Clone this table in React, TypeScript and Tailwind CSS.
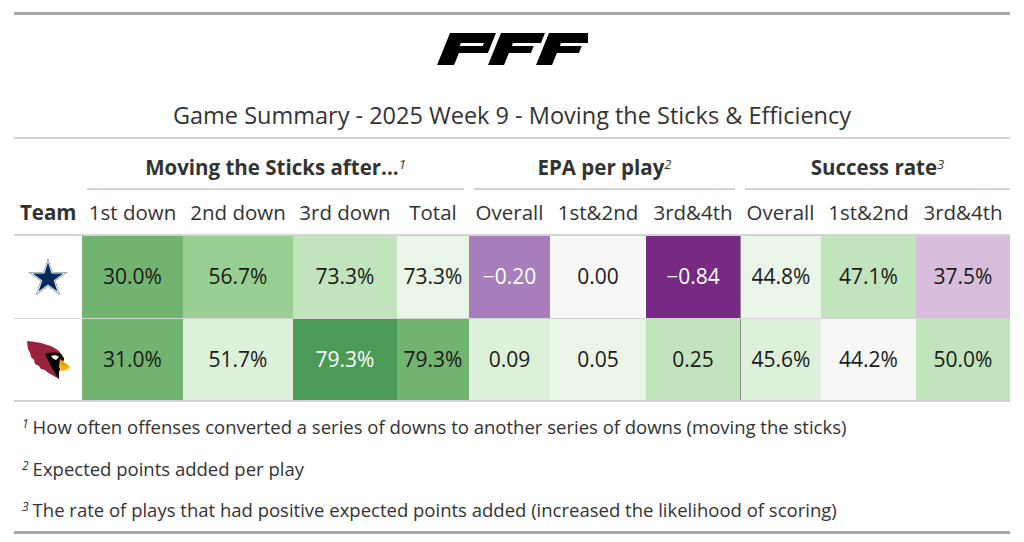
import React from "react";

const cols = "grid-cols-[68px_101px_110px_104px_72px_81px_96px_94px_81px_95px_94px]";

type Cell = { v: string; bg: string; light?: boolean; divider?: boolean };

const rows: { team: "dal" | "ari"; cells: Cell[] }[] = [
  {
    team: "dal",
    cells: [
      { v: "30.0%", bg: "bg-[#72b46f]" },
      { v: "56.7%", bg: "bg-[#99cf92]" },
      { v: "73.3%", bg: "bg-[#c1e4bc]" },
      { v: "73.3%", bg: "bg-[#e9f5e6]" },
      { v: "\u22120.20", bg: "bg-[#a77fbc]", light: true },
      { v: "0.00", bg: "bg-[#f7f7f7]" },
      { v: "\u22120.84", bg: "bg-[#762a83]", light: true },
      { v: "44.8%", bg: "bg-[#e9f5e6]", divider: true },
      { v: "47.1%", bg: "bg-[#c1e4bc]" },
      { v: "37.5%", bg: "bg-[#d9bddc]" },
    ],
  },
  {
    team: "ari",
    cells: [
      { v: "31.0%", bg: "bg-[#72b46f]" },
      { v: "51.7%", bg: "bg-[#ddf0d9]" },
      { v: "79.3%", bg: "bg-[#4b9a55]", light: true },
      { v: "79.3%", bg: "bg-[#72b46f]" },
      { v: "0.09", bg: "bg-[#ddf0d9]" },
      { v: "0.05", bg: "bg-[#e9f5e6]" },
      { v: "0.25", bg: "bg-[#c1e4bc]" },
      { v: "45.6%", bg: "bg-[#ddf0d9]", divider: true },
      { v: "44.2%", bg: "bg-[#f7f7f7]" },
      { v: "50.0%", bg: "bg-[#c1e4bc]" },
    ],
  },
];

const PffLogo = () => (
  <svg width="152" height="36" viewBox="0 0 152 36">
    <g transform="translate(14 2) skewX(-22)" fill="#000">
      <path fillRule="evenodd" d="M0 0 H46 V20 H17 V32 H0 Z M15 10 H38 V13 H15 Z" />
      <path fillRule="evenodd" d="M51 0 H95 V10 H67 V13 H89 V20 H67 V32 H51 Z" />
      <path fillRule="evenodd" d="M99 0 H143 V10 H115 V13 H137 V20 H115 V32 H99 Z" />
    </g>
  </svg>
);

const starPts =
  "0,-1 0.2245,-0.309 0.951,-0.309 0.363,0.118 0.588,0.809 0,0.382 -0.588,0.809 -0.363,0.118 -0.951,-0.309 -0.2245,-0.309";

const Star = () => (
  <svg width="42" height="40" viewBox="0 0 42 40">
    <g transform="translate(21 21.5)">
      <polygon points={starPts} fill="#8b9aa9" transform="scale(21)" />
      <polygon points={starPts} fill="#ffffff" transform="scale(18.5)" />
      <polygon points={starPts} fill="#002a5c" transform="scale(16)" />
    </g>
  </svg>
);

const Cardinal = () => (
  <svg width="44" height="40" viewBox="0 0 44 40">
    <path
      d="M1 1 C14 2 26 5 33 11 L38 18 L36 25 L33 30 L33 39 C29 37 25 34 21 32 L19 30 L15 29 L13 26 L9 24 L8 20 L5 17 L4 13 L2 9 Z"
      fill="#97233f"
    />
    <path d="M19 14 C25 12 31 12 35 14 L38 19 L35 27 L33 32 L33 39 C30 35 27 30 25 26 C23 22 21 18 19 14 Z" fill="#000" />
    <path d="M25 16 C28 15 31 15 33 17 L30 20 C28 19 26 18 25 16 Z" fill="#fff" />
    <path d="M34 19 L44 27 C42 30 38 31 35 31 L33 27 Z" fill="#ffb612" />
    <path d="M34 19 L44 27 L35 26 Z" fill="#e8a000" />
  </svg>
);

export default function App() {
  return (
    <div className="w-[1024px] h-[542px] bg-white font-['Open_Sans',sans-serif] text-[#333333]">
      <div className="pt-[12px] mx-auto w-[996px]">
        <div className="border-t-[3px] border-[#a8a8a8]" />
        <div className="flex justify-center pt-[16px] h-[85px]">
          <PffLogo />
        </div>
        <div className="text-center text-[23.5px] leading-[30px] pb-[7px]">
          Game Summary - 2025 Week 9 - Moving the Sticks &amp; Efficiency
        </div>
        <div className="border-t-2 border-[#d3d3d3]" />

        <div className={`grid ${cols}`}>
          <div />
          <div className="col-span-4 px-[5px] pt-[15px]">
            <div className="border-b-2 border-[#d3d3d3] pb-[8px] text-center text-[20.5px] font-bold leading-[26px]">
              Moving the Sticks after...<sup className="font-normal italic text-[13px]">1</sup>
            </div>
          </div>
          <div className="col-span-3 px-[5px] pt-[15px]">
            <div className="border-b-2 border-[#d3d3d3] pb-[8px] text-center text-[20.5px] font-bold leading-[26px]">
              EPA per play<sup className="font-normal italic text-[13px]">2</sup>
            </div>
          </div>
          <div className="col-span-3 pl-[5px] pt-[15px]">
            <div className="border-b-2 border-[#d3d3d3] pb-[8px] text-center text-[20.5px] font-bold leading-[26px]">
              Success rate<sup className="font-normal italic text-[13px]">3</sup>
            </div>
          </div>

          <div className="pl-[6px] text-[20.5px] font-bold leading-[44px]">Team</div>
          {["1st down", "2nd down", "3rd down", "Total", "Overall", "1st&2nd", "3rd&4th", "Overall", "1st&2nd", "3rd&4th"].map(
            (h, i) => (
              <div key={i} className="text-center text-[20.5px] leading-[44px] whitespace-nowrap">
                {h}
              </div>
            )
          )}
        </div>
        <div className="border-t-2 border-[#d3d3d3]" />

        {rows.map((r, ri) => (
          <div key={ri} className={`grid ${cols} h-[82px] ${ri > 0 ? "border-t border-[#d3d3d3]" : ""}`}>
            <div className="flex items-center justify-center bg-white">
              {r.team === "dal" ? <Star /> : <Cardinal />}
            </div>
            {r.cells.map((c, ci) => (
              <div
                key={ci}
                className={`flex items-center justify-center text-[21px] ${c.bg} ${
                  c.light ? "text-white" : "text-[#1a1a1a]"
                } ${c.divider ? "border-l border-[#8a8a8a]" : ""}`}
              >
                {c.v}
              </div>
            ))}
          </div>
        ))}
        <div className="border-t-2 border-[#d3d3d3]" />

        <div className="pl-[8px] pt-[4px] text-[18.5px] leading-[41.5px]">
          <div>
            <sup className="italic text-[12px] mr-[4px]">1</sup>How often offenses converted a series of downs to another series of downs (moving the sticks)
          </div>
          <div>
            <sup className="italic text-[12px] mr-[4px]">2</sup>Expected points added per play
          </div>
          <div>
            <sup className="italic text-[12px] mr-[4px]">3</sup>The rate of plays that had positive expected points added (increased the likelihood of scoring)
          </div>
        </div>
        <div className="border-t-[3px] border-[#a8a8a8]" />
      </div>
    </div>
  );
}
